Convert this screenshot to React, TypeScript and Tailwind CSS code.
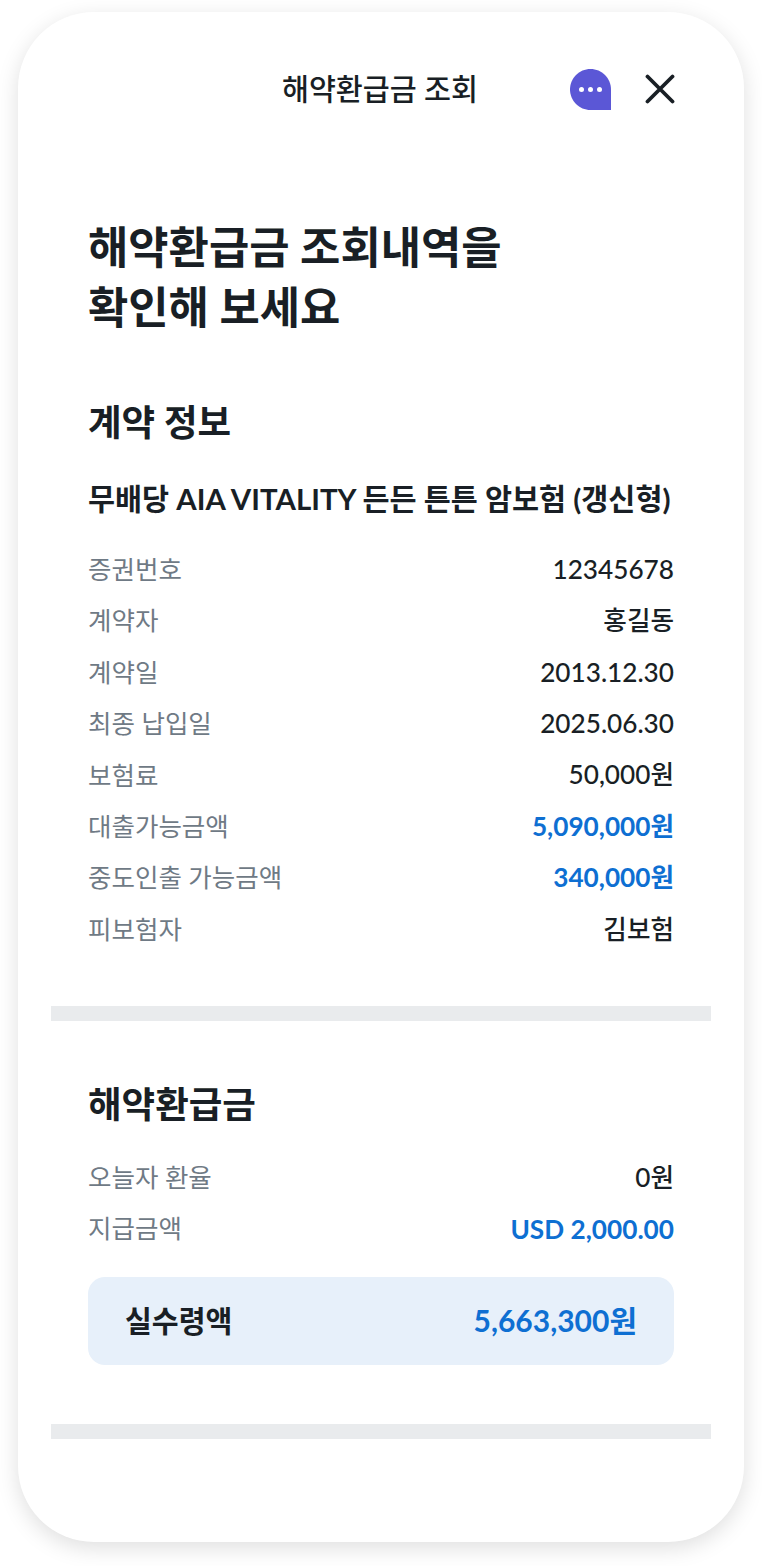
import React from "react";

function Row({ label, value, blue }: { label: string; value: string; blue?: boolean }) {
  const parts = value.split(/([가-힣]+)/).filter(Boolean);
  return (
    <div className="flex items-center justify-between h-[51.4px]">
      <span className="text-[25.5px] leading-none text-[#6f7a85]">{label}</span>
      <span className={blue ? "-mt-[1px] text-[26.2px] leading-none font-bold text-[#0e6fd2]" : "-mt-[1px] text-[26.2px] leading-none font-medium text-[#191f25]"}>
        {parts.map((p, i) =>
          /[가-힣]/.test(p) ? (
            <span key={i} className="text-[25.6px]">{p}</span>
          ) : (
            <span key={i}>{p}</span>
          )
        )}
      </span>
    </div>
  );
}

export default function App() {
  return (
    <div className="w-[762px] h-[1566px] bg-white pt-3 px-[18px] font-['Lato','Noto_Sans_CJK_KR',sans-serif]">
      <div className="w-[726px] h-[1530px] rounded-[76px] bg-white shadow-[0_6px_22px_rgba(0,0,0,0.13)] flex flex-col px-[33px]">
        <header className="h-[205px] pt-[56px] flex items-start relative">
          <div className="w-full text-center pr-[2px] text-[29.3px] leading-[42px] font-medium text-[#191f25]">해약환급금 조회</div>
          <div className="absolute right-[100px] top-[57px]">
            <svg width="41" height="41" viewBox="0 0 41 41">
              <path d="M20.5 0C31.8 0 41 9.2 41 20.5V41H20.5C9.2 41 0 31.8 0 20.5C0 9.2 9.2 0 20.5 0Z" fill="#5b57d6" />
              <circle cx="11.5" cy="20.5" r="2.5" fill="#fff" />
              <circle cx="20.5" cy="20.5" r="2.5" fill="#fff" />
              <circle cx="29.5" cy="20.5" r="2.5" fill="#fff" />
            </svg>
          </div>
          <div className="absolute right-[36px] top-[62px]">
            <svg width="30" height="30" viewBox="0 0 30 30" fill="none" stroke="#191f25" strokeWidth="3.8" strokeLinecap="round">
              <path d="M2.5 2.5L27.5 27.5M27.5 2.5L2.5 27.5" />
            </svg>
          </div>
        </header>
        <section className="px-[37px]">
          <h1 className="text-[43.8px] leading-[60px] font-bold text-[#191f25]">해약환급금 조회내역을<br />확인해 보세요</h1>
          <h2 className="text-[36.5px] leading-[44px] font-bold text-[#191f25] mt-[63px]">계약 정보</h2>
          <h3 className="text-[29.4px] leading-[40px] font-bold text-[#191f25] mt-[35px] mb-[25px] whitespace-nowrap">무배당 AIA VITALITY 든든 튼튼 암보험 (갱신형)</h3>
          <Row label="증권번호" value="12345678" />
          <Row label="계약자" value="홍길동" />
          <Row label="계약일" value="2013.12.30" />
          <Row label="최종 납입일" value="2025.06.30" />
          <Row label="보험료" value="50,000원" />
          <Row label="대출가능금액" value="5,090,000원" blue />
          <Row label="중도인출 가능금액" value="340,000원" blue />
          <Row label="피보험자" value="김보험" />
        </section>
        <div className="h-[15px] bg-[#e9ebed] mt-[51px]" />
        <section className="px-[37px]">
          <h2 className="text-[36.5px] leading-[48px] font-bold text-[#191f25] mt-[59px] mb-[24px]">해약환급금</h2>
          <Row label="오늘자 환율" value="0원" />
          <Row label="지급금액" value="USD 2,000.00" blue />
          <div className="mt-[22px] h-[88px] rounded-[17px] bg-[#e7f0fa] px-[37px] flex items-center justify-between">
            <span className="text-[29.2px] font-bold text-[#191f25]">실수령액</span>
            <span className="text-[30px] font-bold text-[#0e6fd2]">5,663,300원</span>
          </div>
        </section>
        <div className="h-[15px] bg-[#e9ebed] mt-[59px]" />
      </div>
    </div>
  );
}
